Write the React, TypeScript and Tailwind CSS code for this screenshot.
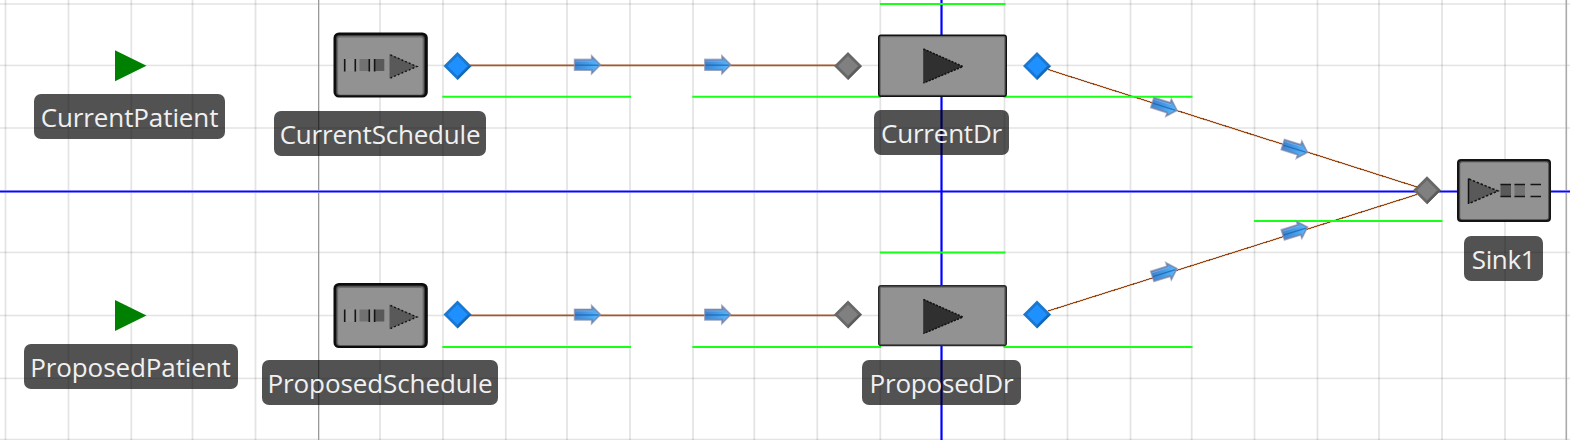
type LabelProps = { text: string; place: string; tracking: string };

const LABELS: LabelProps[] = [
  { text: "CurrentPatient", place: "left-[34px] top-[94px] w-[191px]", tracking: "tracking-[-0.1px]" },
  { text: "CurrentSchedule", place: "left-[274px] top-[111px] w-[212px]", tracking: "tracking-[-0.2px]" },
  { text: "CurrentDr", place: "left-[874px] top-[110px] w-[135px]", tracking: "tracking-[-0.2px]" },
  { text: "Sink1", place: "left-[1464px] top-[236px] w-[79px]", tracking: "tracking-[-0.4px]" },
  { text: "ProposedPatient", place: "left-[23.5px] top-[344px] w-[214px]", tracking: "tracking-[-0.1px]" },
  { text: "ProposedSchedule", place: "left-[262px] top-[360px] w-[236px]", tracking: "tracking-[-0.1px]" },
  { text: "ProposedDr", place: "left-[862px] top-[360px] w-[159px]", tracking: "tracking-[-0.2px]" },
];

const COLUMNS = [5.5, 68.5, 131.3, 192.5, 255.5, 380, 443, 505.8, 567, 630, 693, 754.3, 817.3, 880.3, 1004.5, 1067.5, 1130.5, 1191.7, 1254.5, 1317.5, 1379, 1442, 1505];
const ROWS = [4, 65.4, 128, 252.4, 315.5, 378.4, 439.5];

function Label({ text, place, tracking }: LabelProps) {
  return (
    <div className={`absolute flex h-[45px] items-center justify-center rounded-[7px] bg-black/[0.68] ${place}`}>
      <span className={`whitespace-nowrap font-['Open_Sans','Noto_Sans',sans-serif] text-[26px] leading-none text-[#f0f0f0] ${tracking}`}>{text}</span>
    </div>
  );
}

function Grid() {
  return (
    <g>
      {COLUMNS.map((x) => <rect key={x} x={x - 0.9} y="0" width="1.8" height="440" fill="#000" opacity="0.105" />)}
      {ROWS.map((y) => <rect key={y} x="0" y={y - 0.8} width="1570" height="1.6" fill="#000" opacity="0.105" />)}
      <rect x="318" y="0" width="1.3" height="440" fill="#999" />
      <rect x="1565.5" y="0" width="1.6" height="440" fill="#aaa" />
      <rect x="0" y="190" width="1570" height="3" fill="#8080ff" />
      <rect x="0" y="191" width="1570" height="1" fill="#0909f4" />
      <rect x="940.4" y="0" width="2.2" height="440" fill="#0000ff" />
    </g>
  );
}

function GreenTriangle({ y }: { y: number }) {
  return <path d={`M115 ${y - 15.5}L146.5 ${y}L115 ${y + 15.5}Z`} fill="#008000" />;
}

function Source({ y }: { y: number }) {
  return (
    <g transform={`translate(333.5 ${y})`}>
      <rect x="0" y="0" width="94.3" height="65" rx="5.5" fill="#0c0c0c" />
      <rect x="2.4" y="2.5" width="89" height="60.5" rx="3.5" fill="#3e3e3e" />
      <rect x="3.4" y="3.5" width="87" height="59" rx="3" fill="#6c6c6c" />
      <rect x="4.6" y="5" width="84.5" height="57" rx="2" fill="#929292" />
      <rect x="12" y="26.5" width="10" height="12" fill="#979797" />
      <rect x="26" y="26.5" width="10" height="12" fill="#727272" />
      <rect x="41.5" y="26.5" width="9.3" height="12" fill="#595959" />
      <path d="M11.2 26.5V39M21.8 26.5V39M35.8 26.5V39M41.1 26.5V39" stroke="#151515" strokeWidth="1.6" />
      <path d="M56 21.5L84 34L56 46Z" fill="#595959" />
      <path d="M57 22.5L83.5 34L57 45.5" fill="none" stroke="#111" strokeWidth="1.4" strokeDasharray="1.8 2.2" />
    </g>
  );
}

function Server({ y, h, edge }: { y: number; h: number; edge: string }) {
  return (
    <g transform={`translate(878 ${y})`}>
      <rect x="0" y="0" width="129" height={h} rx="3" fill={edge} />
      <rect x="1.5" y="1.5" width="126" height={h - 3} rx="1.5" fill="#646464" />
      <rect x="2.7" y="2.7" width="123.5" height={h - 5} fill="#929292" />
      <path d="M45.2 14L85 32L45.2 49Z" fill="#303030" />
      <path d="M45.6 14.5L85 32L45.6 48.5" fill="none" stroke="#111" strokeWidth="1.5" strokeDasharray="2 1.4" />
    </g>
  );
}

function Sink() {
  return (
    <g transform="translate(1457 159)">
      <rect x="0" y="0" width="94" height="63" rx="4" fill="#141414" />
      <rect x="2" y="2" width="90.2" height="59" rx="2.5" fill="#4a4a4a" />
      <rect x="3.2" y="3.2" width="88" height="57" rx="2" fill="#929292" />
      <path d="M11 19.5L41 32L11 45Z" fill="#595959" />
      <path d="M11.5 19.5V45" stroke="#111" strokeWidth="1.5" />
      <path d="M12 20L41 32L12 44.5" fill="none" stroke="#111" strokeWidth="1.5" strokeDasharray="2.4 1.8" />
      <rect x="43.5" y="25" width="10.5" height="13" fill="#595959" />
      <rect x="57.5" y="25" width="10.5" height="13" fill="#727272" />
      <path d="M43.5 25.4H54M43.5 37.6H54M57.5 25.4H68M57.5 37.6H68M73.5 25.4H84M73.5 37.6H84" stroke="#151515" strokeWidth="1.5" />
    </g>
  );
}

function Diamond({ x, y, blue }: { x: number; y: number; blue?: boolean }) {
  return (
    <g transform={`translate(${x} ${y})`}>
      <path d="M0 -14L14 0L0 14L-14 0Z" fill={blue ? "#1b78d0" : "#686868"} />
      <path d="M0 14L14 0L11 0L0 11Z" fill={blue ? "#1766b3" : "#5b5b5b"} />
      <path d="M0 -10L10 0L0 10L-10 0Z" fill={blue ? "#1e90ff" : "#808080"} />
    </g>
  );
}

function Arrow({ x, y, angle = 0 }: { x: number; y: number; angle?: number }) {
  return (
    <g transform={`translate(${x} ${y}) rotate(${angle})`}>
      <path d="M-13.2 -5.6H3.9V-9.6L13.3 0L3.9 9.6V5.6H-13.2Z" fill="#6f80ac" stroke="#8d99b8" strokeWidth="1.2" strokeOpacity="0.65" />
      <path d="M-12.2 -4.2H5.2V-6.6L11.8 0L5.2 6.6V4.2H-12.2Z" fill="url(#arrowFill)" />
      <path d="M-12 -3.6H5.5" stroke="#8fc0ee" strokeWidth="1" strokeOpacity="0.55" />
      <path d="M-12.5 0.4H11" stroke="#1763aa" strokeWidth="1.4" strokeOpacity="0.75" />
    </g>
  );
}

export default function App() {
  return (
    <main className="relative h-[440px] w-[1570px] overflow-hidden bg-white">
      <svg className="block" width="1570" height="440" viewBox="0 0 1570 440">
        <defs>
          <linearGradient id="arrowFill" x1="0" x2="1" y1="0" y2="0.2">
            <stop offset="0" stopColor="#3f80cc" />
            <stop offset="0.55" stopColor="#459be8" />
            <stop offset="1" stopColor="#58b4fa" />
          </linearGradient>
        </defs>
        <Grid />
        <g fill="none" stroke="#a3592b">
          <path d="M470 65.4H836M470 315.4H836" strokeWidth="1.8" />
          <path d="M1048 69.5L1417 187M1048 311L1417 194.5" strokeWidth="1.6" strokeOpacity="0.55" />
          <path d="M1048 69.5L1417 187M1048 311L1417 194.5" stroke="#964914" strokeWidth="1" shapeRendering="crispEdges" />
        </g>
        <path d="M880 4H1005.5M442.3 96.7H631M692.3 96.7H881M1003.5 96.7H1192.5M880 252.5H1005.5M442.3 347H631M692.3 347H881M1003.5 347H1192.5M1254 221H1442.5" stroke="#18ff18" strokeWidth="2" />
        <GreenTriangle y={65.8} />
        <GreenTriangle y={315.4} />
        <Source y={32.5} />
        <Source y={283} />
        <Server y={34.5} h={62.5} edge="#111111" />
        <Server y={285} h={61.3} edge="#2a2a2a" />
        <Sink />
        <Diamond x={457.5} y={66} blue />
        <Diamond x={848} y={66} />
        <Diamond x={1037} y={66} blue />
        <Diamond x={457.5} y={314.6} blue />
        <Diamond x={848} y={314.6} />
        <Diamond x={1037} y={314.6} blue />
        <Diamond x={1427} y={190.3} />
        <Arrow x={587.5} y={64.8} />
        <Arrow x={717.8} y={64.8} />
        <Arrow x={587.5} y={314.6} />
        <Arrow x={717.8} y={314.6} />
        <Arrow x={1164.7} y={106.5} angle={17.5} />
        <Arrow x={1295.2} y={148.5} angle={17.5} />
        <Arrow x={1164.7} y={272.5} angle={-17.5} />
        <Arrow x={1295.2} y={231} angle={-17.5} />
      </svg>
      {LABELS.map((label) => <Label key={label.text} {...label} />)}
    </main>
  );
}
